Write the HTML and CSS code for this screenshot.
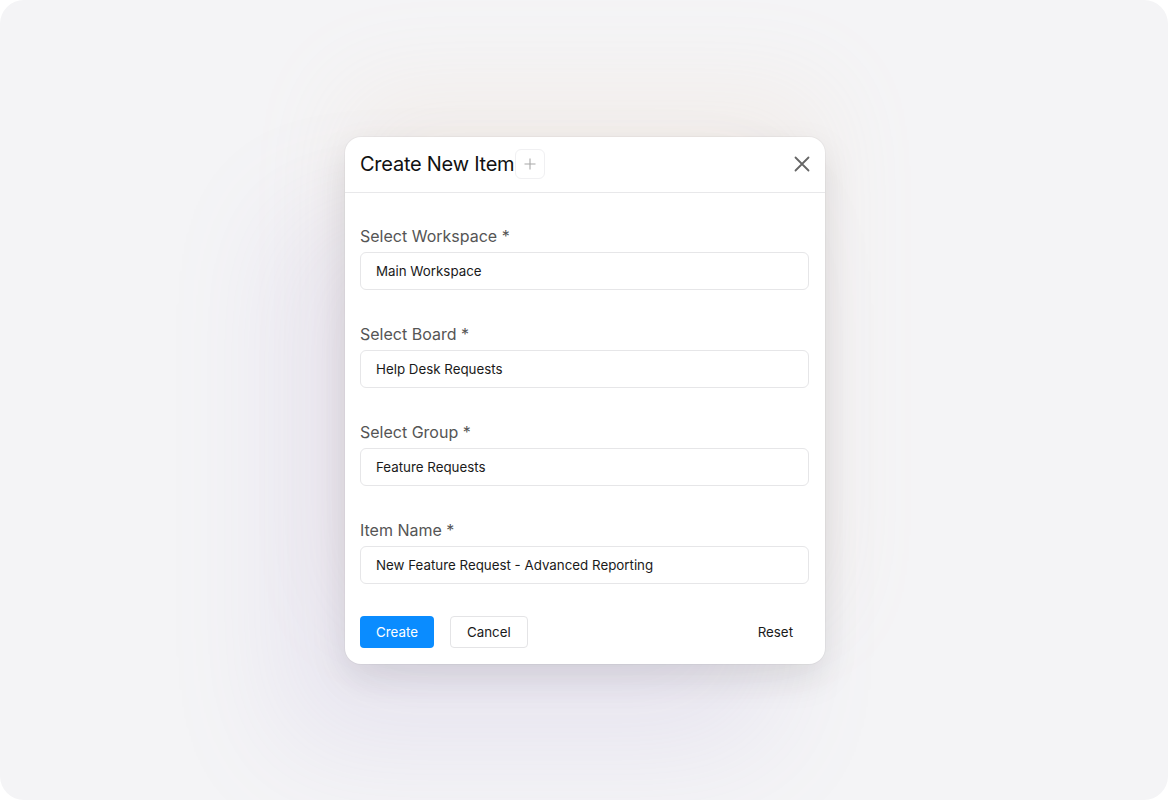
FILE: index.html
```html
<!DOCTYPE html>
<html lang="en">

<head>
    <meta charset="UTF-8">
    <meta name="viewport" content="width=device-width, initial-scale=1.0">
    <title>Create New Item</title>
    <link rel="stylesheet" href="styles.css">
</head>

<body>
    <div class="stage">
        <div class="modal">
            <div class="modal-header">
                <h2 class="modal-title">Create New Item</h2>
                <button class="add-btn" type="button">
                    <svg width="12" height="12" viewBox="0 0 12 12"><path d="M6 0.5v11M0.5 6h11" stroke="#a8a8a8" stroke-width="1.1" fill="none"/></svg>
                </button>
                <button class="close-btn" type="button">
                    <svg width="16" height="16" viewBox="0 0 16 16"><path d="M1.5 1.5l13 13M14.5 1.5l-13 13" stroke="#666" stroke-width="1.8" fill="none" stroke-linecap="round"/></svg>
                </button>
            </div>

            <form class="modal-body">
                <div class="field">
                    <label for="workspace">Select Workspace *</label>
                    <input type="text" id="workspace" value="Main Workspace">
                </div>
                <div class="field">
                    <label for="board">Select Board *</label>
                    <input type="text" id="board" value="Help Desk Requests">
                </div>
                <div class="field">
                    <label for="group">Select Group *</label>
                    <input type="text" id="group" value="Feature Requests">
                </div>
                <div class="field">
                    <label for="itemname">Item Name *</label>
                    <input type="text" id="itemname" value="New Feature Request - Advanced Reporting">
                </div>

                <div class="actions">
                    <button type="submit" class="btn btn-primary">Create</button>
                    <button type="button" class="btn btn-outline">Cancel</button>
                    <button type="reset" class="btn btn-plain">Reset</button>
                </div>
            </form>
        </div>
    </div>
</body>

</html>
```

FILE: styles.css
```css
* {
    margin: 0;
    padding: 0;
    box-sizing: border-box;
}

body {
    background: #fff;
    font-family: Inter, 'Noto Sans', sans-serif;
}

.stage {
    width: 1168px;
    height: 800px;
    border-radius: 24px;
    background: #f4f4f6;
    display: flex;
    align-items: center;
    justify-content: center;
}

.modal {
    width: 480px;
    margin-left: 2px;
    background: #fff;
    border-radius: 16px;
    box-shadow: 0 0 0 1px rgba(0, 0, 0, 0.03),
        0 14px 36px rgba(0, 0, 0, 0.10),
        -60px 80px 120px rgba(150, 120, 200, 0.13),
        0 -50px 100px rgba(240, 190, 150, 0.11);
}

.modal-header {
    display: flex;
    align-items: center;
    height: 56px;
    padding: 0 15px;
    border-bottom: 1px solid #e8e8ea;
}

.modal-title {
    font-size: 20px;
    font-weight: 400;
    color: #111;
    letter-spacing: -0.25px;
}

.add-btn {
    width: 30px;
    height: 30px;
    margin-left: 1px;
    border: 1px solid #f0f0f2;
    border-radius: 6px;
    background: #fff;
    display: flex;
    align-items: center;
    justify-content: center;
    cursor: pointer;
}

.close-btn {
    margin-left: auto;
    width: 16px;
    height: 24px;
    border: none;
    background: none;
    display: flex;
    align-items: center;
    justify-content: center;
    cursor: pointer;
}

.modal-body {
    padding: 31px 16px 16px 15px;
}

.field {
    margin-bottom: 32px;
}

.field label {
    display: block;
    font-size: 16px;
    line-height: 24px;
    color: #555;
    margin-bottom: 4px;
}

.field input {
    display: block;
    width: 100%;
    height: 38px;
    padding: 0 15px;
    border: 1.5px solid #e6e6e8;
    border-radius: 6px;
    font-family: Inter, 'Noto Sans', sans-serif;
    font-size: 13.33px;
    color: #1a1a1a;
    outline: none;
}

.actions {
    display: flex;
    align-items: center;
    gap: 16px;
}

.btn {
    height: 32px;
    padding: 0 16px;
    border-radius: 4px;
    font-family: Inter, 'Noto Sans', sans-serif;
    font-size: 13.33px;
    cursor: pointer;
}

.btn-primary {
    background: #0a8cff;
    border: none;
    color: #fff;
}

.btn-outline {
    background: #fff;
    border: 1px solid #e4e4e6;
    color: #1a1a1a;
}

.btn-plain {
    margin-left: auto;
    background: none;
    border: none;
    color: #1a1a1a;
}
```
